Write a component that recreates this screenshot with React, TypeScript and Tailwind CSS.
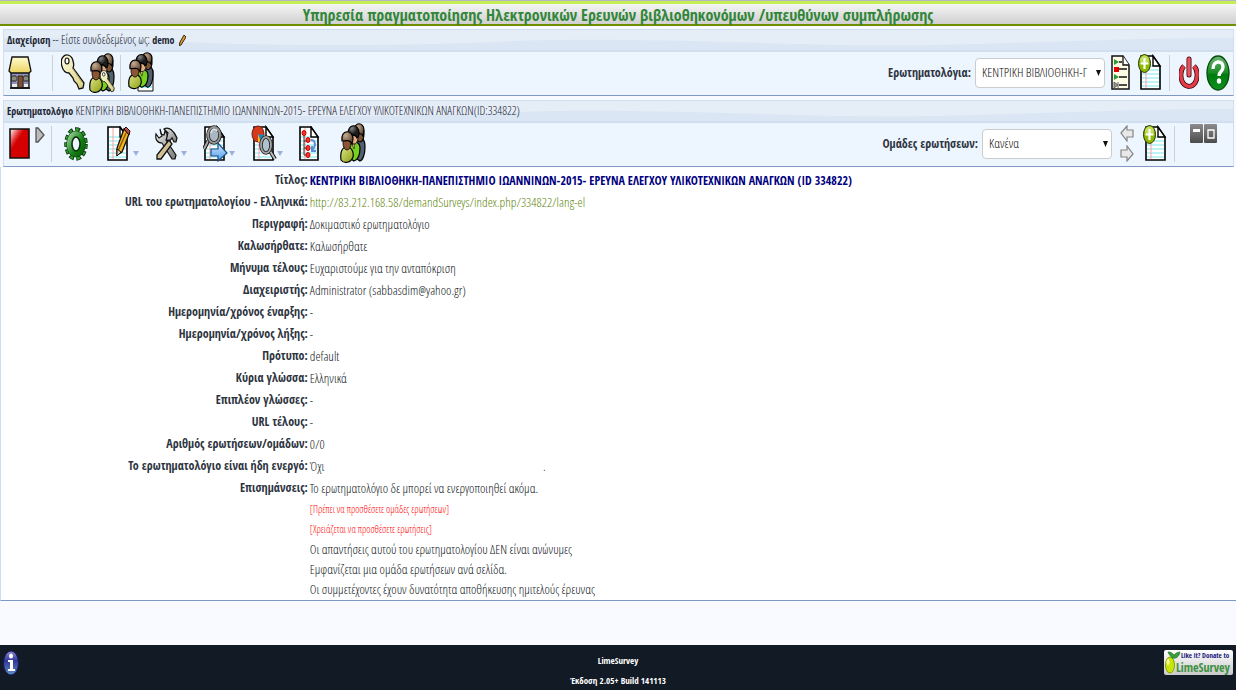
import type { ReactNode } from 'react';

type IconProps = { w: number; h: number; children: ReactNode; className?: string };

const Icon = ({ w, h, children, className = '' }: IconProps) => (
  <svg width={w} height={h} viewBox={`0 0 ${w} ${h}`} className={`block shrink-0 ${className}`} aria-hidden="true">
    {children}
  </svg>
);

const Defs = () => (
  <svg width="0" height="0" className="absolute" aria-hidden="true">
    <defs>
      <linearGradient id="roof" x1="0" y1="0" x2="0" y2="1">
        <stop offset="0" stopColor="#fffbd0" />
        <stop offset="1" stopColor="#ecd35e" />
      </linearGradient>
      <linearGradient id="brass" x1="0" y1="0" x2="1" y2="1">
        <stop offset="0" stopColor="#fffde0" />
        <stop offset="1" stopColor="#d9cf80" />
      </linearGradient>
      <linearGradient id="stop" x1="0" y1="0" x2="1" y2="1">
        <stop offset="0" stopColor="#fff" />
        <stop offset="0.3" stopColor="#e03030" />
        <stop offset="0.4" stopColor="#d40000" />
      </linearGradient>
      <linearGradient id="gearGreen" x1="0" y1="0" x2="1" y2="1">
        <stop offset="0" stopColor="#8fcc8f" />
        <stop offset="0.6" stopColor="#168016" />
        <stop offset="1" stopColor="#0a640a" />
      </linearGradient>
      <linearGradient id="helpGreen" x1="0" y1="0" x2="0" y2="1">
        <stop offset="0" stopColor="#6fb574" />
        <stop offset="0.5" stopColor="#178a22" />
        <stop offset="0.55" stopColor="#007a0c" />
        <stop offset="1" stopColor="#0c9320" />
      </linearGradient>
      <radialGradient id="skin" cx="0.35" cy="0.3" r="0.8">
        <stop offset="0" stopColor="#c9ad92" />
        <stop offset="1" stopColor="#4d3522" />
      </radialGradient>
      <radialGradient id="hair" cx="0.35" cy="0.2" r="0.8">
        <stop offset="0" stopColor="#888" />
        <stop offset="0.6" stopColor="#1d1d1d" />
      </radialGradient>
      <linearGradient id="shirt" x1="0" y1="0" x2="1" y2="1">
        <stop offset="0" stopColor="#dfe58a" />
        <stop offset="1" stopColor="#8ba010" />
      </linearGradient>
      <linearGradient id="steel" x1="0" y1="0" x2="1" y2="1">
        <stop offset="0" stopColor="#eee" />
        <stop offset="1" stopColor="#777" />
      </linearGradient>
      <linearGradient id="dark" x1="0" y1="0" x2="0" y2="1">
        <stop offset="0" stopColor="#8b8b8b" />
        <stop offset="1" stopColor="#4c4c4c" />
      </linearGradient>
      <linearGradient id="sky" x1="0" y1="0" x2="0" y2="1">
        <stop offset="0" stopColor="#d6ebff" />
        <stop offset="1" stopColor="#4d9bea" />
      </linearGradient>
      <linearGradient id="info" x1="0" y1="0" x2="0" y2="1">
        <stop offset="0" stopColor="#8c8fd0" />
        <stop offset="0.4" stopColor="#31379a" />
        <stop offset="1" stopColor="#5d8fc0" />
      </linearGradient>
      <linearGradient id="badge" x1="0" y1="0" x2="0" y2="1">
        <stop offset="0" stopColor="#fff" />
        <stop offset="1" stopColor="#c9c9c9" />
      </linearGradient>
    </defs>
  </svg>
);

const Paper = ({ x = 1, y = 1, w = 19, h = 33 }) => (
  <g>
    <path d={`M${x} ${y}h${w - 7}l7 10v${h - 10}h-${w}z`} fill="#fff" stroke="#000" strokeWidth="1.6" />
    <path
      d={`M${x + 1} ${y + 10}h${w - 2}M${x + 1} ${y + 14}h${w - 2}M${x + 1} ${y + 18}h${w - 2}M${x + 1} ${y + 22}h${w - 2}M${x + 1} ${y + 26}h${w - 2}M${x + 1} ${y + 30}h${w - 2}`}
      stroke="#a5f0f5"
      strokeWidth="1.5"
    />
    <path d={`M${x + 5} ${y + 1}v${h - 2}`} stroke="#f7a3a3" />
    <path d={`M${x + w - 7} ${y}v10h7z`} fill="#fff" stroke="#000" strokeWidth="1.4" />
  </g>
);

const People = () => (
  <g stroke="#000" strokeWidth="1.2">
    <path d="M16 16c5-4 9 0 9 8 0 7-2 13-5 14l-6-4z" fill="#52616f" />
    <ellipse cx="20" cy="11" rx="4" ry="8" fill="#7b5436" />
    <path d="M14 8c0-10 10-9 10-1l-1 6c-2-4-5-2-9-5z" fill="url(#skin)" />
    <path d="M9 23c2-6 11-5 11 2 0 8-3 12-6 13l-6-4z" fill="#76d21e" />
    <path d="M12 21h3l-1 5z" fill="#e2ad80" strokeWidth=".5" />
    <ellipse cx="14" cy="15" rx="4" ry="6" fill="#e2ad80" strokeWidth=".7" />
    <path d="M8 12c-1-12 11-12 11-2 0 4-2 5-2 5-1-4-5-3-9-3z" fill="url(#hair)" />
    <path d="M1 37c-1-8 1-13 6-13s7 6 6 10c-2 6-9 7-12 3z" fill="url(#shirt)" />
    <ellipse cx="7" cy="20" rx="4" ry="7" fill="#8d5534" strokeWidth=".8" />
    <path d="M2 18c-2-12 11-12 11-2l-1 5c-2-5-6-3-10-3z" fill="url(#skin)" />
  </g>
);

const KeyShape = () => (
  <g>
    <path
      d="M2 3c3-4 9-2 10 4 1 3 1 5 0 7l11 15-1 5-4 1-2-5-3-3-1-3-4-5c-8 0-9-13-6-16z"
      fill="url(#brass)"
      stroke="#111"
      strokeWidth="1.3"
    />
    <ellipse cx="6" cy="7" rx="2" ry="3" fill="#fff" stroke="#111" strokeWidth="1.2" />
    <path d="M12 15l9 13" stroke="#a59c55" />
  </g>
);

const HomeIcon = () => (
  <Icon w={24} h={34}>
    <path d="M3 14h18v18H3z" fill="#9193ba" stroke="#111" strokeWidth="1.3" />
    <path d="M4 1h16l3 14-2 2H3l-2-2z" fill="url(#roof)" stroke="#111" strokeWidth="1.3" />
    <path d="M4 20h4v5H4zM16 20h4v5h-4z" fill="#f3f4d8" stroke="#222" />
    <path d="M6 20v5M18 20v5" stroke="#222" />
    <path d="M4 28h5v3H4zM16 28h4v3h-4z" fill="#e8e8ee" />
    <path d="M10 20h5v12h-5z" fill="#795339" stroke="#3b2412" />
    <path d="M2 32h20" stroke="#111" strokeWidth="1.5" />
  </Icon>
);

const KeyIcon = () => (
  <Icon w={24} h={37}>
    <KeyShape />
  </Icon>
);

const UsersKeyIcon = () => (
  <Icon w={26} h={40}>
    <People />
    <g transform="translate(11 17) scale(.62)">
      <KeyShape />
    </g>
  </Icon>
);

const UsersPaperIcon = () => (
  <Icon w={27} h={41}>
    <path d="M10 18h15v21H10z" fill="#fff" stroke="#111" />
    <path d="M12 31h12M12 35h12" stroke="#8ff0f4" strokeWidth="1.5" />
    <g transform="scale(1 .93)">
      <People />
    </g>
  </Icon>
);

const UsersIcon = () => (
  <Icon w={26} h={41}>
    <People />
  </Icon>
);

const ListIcon = () => (
  <Icon w={19} h={35}>
    <path d="M1 1h11l6 9v24H1z" fill="#fdfbe4" stroke="#111" strokeWidth="1.5" />
    <path d="M12 1v9h6" fill="#fff" stroke="#111" strokeWidth="1.3" />
    <path d="M8 7h3M8 14h8M8 22h8M8 30h8" stroke="#111" strokeWidth="1.3" />
    <path d="M3 4l5 3-5 3zM3 19l5 3-5 3z" fill="#2a9a35" />
    <path d="M3 12h5v5H3z" fill="#e00000" />
    <path d="M3 27l4 3-4 3zM7 27v6" fill="#999" stroke="#666" />
  </Icon>
);

const AddPageIcon = () => (
  <Icon w={24} h={37}>
    <Paper x={3} y={2} w={19} h={33} />
    <ellipse cx="6.5" cy="9.5" rx="6" ry="9" fill="#8fb800" stroke="#263800" />
    <ellipse cx="6.5" cy="6" rx="4.5" ry="4.5" fill="#c0dc5b" />
    <path d="M6.5 4v11M2.5 9.5h8" stroke="#fff" strokeWidth="2.2" />
  </Icon>
);

const PowerIcon = () => (
  <Icon w={20} h={33}>
    <path d="M5 10C1 14 1 22 4 27c4 5 9 4 12 0 3-5 3-13-1-17" fill="none" stroke="#40070b" strokeWidth="5" />
    <path d="M5 10C1 14 1 22 4 27c4 5 9 4 12 0 3-5 3-13-1-17" fill="none" stroke="#e23e49" strokeWidth="3.4" />
    <path d="M10 3v16" stroke="#40070b" strokeWidth="5" strokeLinecap="round" />
    <path d="M10 3v16" stroke="#e8555e" strokeWidth="3.4" strokeLinecap="round" />
  </Icon>
);

const HelpIcon = () => (
  <Icon w={24} h={36}>
    <ellipse cx="12" cy="18" rx="11" ry="17" fill="url(#helpGreen)" stroke="#064a0a" strokeWidth="1.3" />
    <path d="M7 14c0-9 10-9 10-2 0 5-4 4-4 9" fill="none" stroke="#fff" strokeWidth="3.4" />
    <ellipse cx="13" cy="26" rx="2.2" ry="2.8" fill="#fff" />
  </Icon>
);

const StopIcon = () => (
  <Icon w={21} h={31}>
    <path d="M1 1h19v29H1z" fill="url(#stop)" stroke="#111" strokeWidth="1.6" />
  </Icon>
);

const PlayIcon = () => (
  <Icon w={10} h={16}>
    <path d="M1 1h2l6 7-6 7H1z" fill="#bbb" stroke="#555" strokeWidth="1.3" />
  </Icon>
);

const GearIcon = () => (
  <Icon w={24} h={36}>
    <ellipse cx="12" cy="18" rx="9.5" ry="14.5" fill="none" stroke="#052e05" strokeWidth="4.5" strokeDasharray="4.6 2.4" />
    <ellipse cx="12" cy="18" rx="9.5" ry="14.5" fill="none" stroke="#2f9a2f" strokeWidth="3" strokeDasharray="3 4" strokeDashoffset="-.8" />
    <ellipse cx="12" cy="18" rx="6.5" ry="10" fill="none" stroke="#052e05" strokeWidth="6.5" />
    <ellipse cx="12" cy="18" rx="6.5" ry="10" fill="none" stroke="url(#gearGreen)" strokeWidth="5.5" />
    <ellipse cx="12" cy="18" rx="4" ry="7" fill="#edf4fe" stroke="#052e05" strokeWidth="1.5" />
  </Icon>
);

const EditIcon = () => (
  <Icon w={24} h={36}>
    <Paper />
    <path d="M17 3l5 5-7 18-5 3v-7z" fill="#f2b41f" stroke="#111" strokeWidth="1.3" />
    <path d="M17 3l2-2 4 4-1 4z" fill="#c74545" stroke="#111" />
    <path d="M19 7l-8 18" stroke="#8b5707" strokeWidth="1.4" />
    <path d="M10 23l4 3-4 4z" fill="#e9d3a5" stroke="#111" />
  </Icon>
);

const ToolsIcon = () => (
  <Icon w={24} h={34}>
    <path d="M9 2c5-3 10 2 13 9l-1 4-2 0-2-4-3 4-3-3 2-6z" fill="url(#steel)" stroke="#111" strokeWidth="1.2" />
    <path d="M5 2l1 5 3 1 1-4c3 3 2 7 1 9l10 15-1 4-3 0L7 16C2 16 0 12 1 7l3 4 3-2z" fill="url(#steel)" stroke="#111" strokeWidth="1.2" />
    <path d="M14 13l3 4L6 32l-4 0 0-4z" fill="#cfc092" stroke="#111" strokeWidth="1.3" />
  </Icon>
);

const Lens = () => (
  <g>
    <path d="M5 16l-4 8" stroke="#111" strokeWidth="4" />
    <path d="M5 16l-4 8" stroke="#aaa" strokeWidth="2" />
    <ellipse cx="11" cy="10" rx="6" ry="8" fill="#a9b7c0" stroke="#222" strokeWidth="3.5" />
    <ellipse cx="11" cy="10" rx="6" ry="8" fill="none" stroke="#999" strokeWidth="1.8" />
    <path d="M8 8c1-5 5-5 6-2" stroke="#dde6eb" fill="none" strokeWidth="1.6" />
  </g>
);

const PreviewIcon = () => (
  <Icon w={25} h={37}>
    <Paper x={2} y={2} w={19} h={33} />
    <Lens />
    <path d="M8 24h7v-6l9 10-9 8v-5H8z" fill="url(#sky)" stroke="#174d87" strokeWidth="1.2" />
  </Icon>
);

const StatsIcon = () => (
  <Icon w={26} h={37}>
    <Paper x={3} y={2} w={19} h={33} />
    <ellipse cx="7" cy="9" rx="6" ry="8" fill="#d83b1b" stroke="#6b2010" />
    <path d="M7 9l6 1c0 4-2 6-3 7z" fill="#168ac0" />
    <path d="M7 9v8h3z" fill="#f0c11d" />
    <path d="M19 26l5 8" stroke="#111" strokeWidth="4" />
    <path d="M19 26l5 8" stroke="#bbb" strokeWidth="2" />
    <ellipse cx="15" cy="20" rx="5" ry="8" fill="#afc2cf" stroke="#222" strokeWidth="3.5" />
    <ellipse cx="15" cy="20" rx="5" ry="8" fill="none" stroke="#a5a5a5" strokeWidth="1.8" />
  </Icon>
);

const ReorderIcon = () => (
  <Icon w={21} h={36}>
    <Paper x={1} y={1} w={18} h={33} />
    <path d="M5 7v22M5 15h4M5 22h4M5 29h4" stroke="#333" fill="none" />
    <g fill="#ff3425" stroke="#b00">
      <ellipse cx="5" cy="7" rx="2" ry="2.5" />
      <ellipse cx="9" cy="14" rx="2" ry="2.5" />
      <ellipse cx="9" cy="22" rx="2" ry="2.5" />
      <ellipse cx="9" cy="29" rx="2" ry="2.5" />
    </g>
    <path d="M12 14c5 0 5 7 1 10m0-4v5h4" fill="none" stroke="#5a8fd8" strokeWidth="2" />
  </Icon>
);

const GreyArrow = ({ flip = false }) => (
  <Icon w={14} h={17} className={flip ? 'rotate-180' : ''}>
    <path d="M1 8l6-7v4h6v7H7v4z" fill="#e8e8e8" stroke="#858585" strokeWidth="1.2" />
  </Icon>
);

const Caret = () => (
  <Icon w={6} h={5}>
    <path d="M0 0h6L3 5z" fill="#9db0dc" />
  </Icon>
);

const Bold = ({ children, className = '' }: { children: ReactNode; className?: string }) => (
  <strong className={`font-['Open_Sans_Condensed','Noto_Sans',sans-serif] font-bold ${className}`}>{children}</strong>
);

const Separator = ({ className = '' }) => <span className={`h-9 w-px shrink-0 bg-[#cdd1d6] ${className}`} />;

const ToolButton = ({ label, children, className = '' }: { label: string; children: ReactNode; className?: string }) => (
  <button type="button" aria-label={label} className={`shrink-0 cursor-pointer ${className}`}>
    {children}
  </button>
);

const Bar = ({ title, children }: { title: ReactNode; children: ReactNode }) => (
  <section className="border border-[#cfdff0] border-b-[#7f99c5] bg-[#edf5ff]">
    <div className="relative h-[22px] border-b-2 border-[#d0dff0] bg-[#e5edf7]">
      <svg viewBox="0 0 1230 20" preserveAspectRatio="none" className="absolute inset-0 h-full w-full" aria-hidden="true">
        <path d="M0 8C150 8 200 16 350 15S500 9 620 10 820 17 930 15 1120 8 1230 8v12H0z" fill="#dae6f4" />
      </svg>
      <h2 className="relative truncate pl-[3px] text-[12px] leading-5 text-[#1c2330]">{title}</h2>
    </div>
    <div className="flex h-[43px] items-center pb-[2px]">{children}</div>
  </section>
);

type SelectProps = { id: string; label: string; option: string; className?: string };

const SelectField = ({ id, label, option, className = '' }: SelectProps) => (
  <div className={`flex items-center ${className}`}>
    <label htmlFor={id} className="mr-1 text-[12px] text-[#2d3440]">
      <Bold>{label}</Bold>
    </label>
    <div className="relative">
      <select
        id={id}
        className="block h-[30px] w-[130px] appearance-none rounded-sm border border-[#ccc] bg-white pl-1.5 pr-4 text-[13px] text-[#111]"
      >
        <option>{option}</option>
      </select>
      <svg width="5" height="6" viewBox="0 0 5 6" className="pointer-events-none absolute right-1 top-3" aria-hidden="true">
        <path d="M0 0h5L2.5 6z" fill="#111" />
      </svg>
    </div>
  </div>
);

const details: { label: string; value: ReactNode }[] = [
  {
    label: 'Τίτλος:',
    value: (
      <Bold className="text-[12px] text-[#000080]">
        ΚΕΝΤΡΙΚΗ ΒΙΒΛΙΟΘΗΚΗ-ΠΑΝΕΠΙΣΤΗΜΙΟ ΙΩΑΝΝΙΝΩΝ-2015- ΕΡΕΥΝΑ ΕΛΕΓΧΟΥ ΥΛΙΚΟΤΕΧΝΙΚΩΝ ΑΝΑΓΚΩΝ (ID 334822)
      </Bold>
    ),
  },
  {
    label: 'URL του ερωτηματολογίου - Ελληνικά:',
    value: (
      <a href="http://83.212.168.58/demandSurveys/index.php/334822/lang-el" className="text-[#5f8710]">
        http://83.212.168.58/demandSurveys/index.php/334822/lang-el
      </a>
    ),
  },
  { label: 'Περιγραφή:', value: 'Δοκιμαστικό ερωτηματολόγιο' },
  { label: 'Καλωσήρθατε:', value: 'Καλωσήρθατε' },
  { label: 'Μήνυμα τέλους:', value: 'Ευχαριστούμε για την ανταπόκριση' },
  { label: 'Διαχειριστής:', value: 'Administrator (sabbasdim@yahoo.gr)' },
  { label: 'Ημερομηνία/χρόνος έναρξης:', value: '-' },
  { label: 'Ημερομηνία/χρόνος λήξης:', value: '-' },
  { label: 'Πρότυπο:', value: 'default' },
  { label: 'Κύρια γλώσσα:', value: 'Ελληνικά' },
  { label: 'Επιπλέον γλώσσες:', value: '-' },
  { label: 'URL τέλους:', value: '-' },
  { label: 'Αριθμός ερωτήσεων/ομάδων:', value: '0/0' },
  {
    label: 'Το ερωτηματολόγιο είναι ήδη ενεργό:',
    value: (
      <span className="flex w-[236px] justify-between">
        <span>Όχι</span>
        <span>.</span>
      </span>
    ),
  },
  { label: 'Επισημάνσεις:', value: 'Το ερωτηματολόγιο δε μπορεί να ενεργοποιηθεί ακόμα.' },
];

const warnings = ['[Πρέπει να προσθέσετε ομάδες ερωτήσεων]', '[Χρειάζεται να προσθέσετε ερωτήσεις]'];

const notes = [
  'Οι απαντήσεις αυτού του ερωτηματολογίου ΔΕΝ είναι ανώνυμες',
  'Εμφανίζεται μια ομάδα ερωτήσεων ανά σελίδα.',
  'Οι συμμετέχοντες έχουν δυνατότητα αποθήκευσης ημιτελούς έρευνας',
];

const Header = () => (
  <header className="border-t border-[#b5b5c5]">
    <div className="border-b-2 border-t-[3px] border-b-[#6f8f00] border-t-[#c5ee55] bg-linear-to-b from-[#f5f5f5] to-[#d0d0d0]">
      <h1 className="h-5 text-center text-[16px] leading-[22px] text-[#328639]">
        <Bold>Υπηρεσία πραγματοποίησης Ηλεκτρονικών Ερευνών βιβλιοθηκονόμων /υπευθύνων συμπλήρωσης</Bold>
      </h1>
    </div>
  </header>
);

const AdminBar = () => (
  <Bar
    title={(
      <span className="flex items-center gap-1">
        <span>
          <Bold className="text-[10px]">Διαχείριση</Bold> -- Είστε συνδεδεμένος ως: <Bold className="text-[10px]">demo</Bold>
        </span>
        <Icon w={7} h={11}>
          <path d="M5 0l2 2-5 8-2 1 1-4z" fill="#e29525" stroke="#3c2b17" />
        </Icon>
      </span>
    )}
  >
    <ToolButton label="Αρχική" className="ml-1"><HomeIcon /></ToolButton>
    <Separator className="ml-5" />
    <ToolButton label="Κωδικός" className="ml-2"><KeyIcon /></ToolButton>
    <ToolButton label="Διαχειριστές" className="ml-1"><UsersKeyIcon /></ToolButton>
    <Separator className="ml-[5px]" />
    <ToolButton label="Συμμετέχοντες" className="ml-[7px]"><UsersPaperIcon /></ToolButton>
    <SelectField id="survey" label="Ερωτηματολόγια:" option="ΚΕΝΤΡΙΚΗ ΒΙΒΛΙΟΘΗΚΗ-Γ" className="ml-auto" />
    <ToolButton label="Λίστα ερευνών" className="ml-[6px]"><ListIcon /></ToolButton>
    <ToolButton label="Νέα έρευνα" className="ml-2"><AddPageIcon /></ToolButton>
    <Separator className="ml-[7px]" />
    <ToolButton label="Έξοδος" className="ml-[9px]"><PowerIcon /></ToolButton>
    <ToolButton label="Βοήθεια" className="ml-[7px] mr-[3px]"><HelpIcon /></ToolButton>
  </Bar>
);

const MenuTool = ({ label, children }: { label: string; children: ReactNode }) => (
  <ToolButton label={label} className="flex w-12 items-center justify-between pr-4">
    {children}
    <span className="pt-5"><Caret /></span>
  </ToolButton>
);

const SurveyBar = () => (
  <Bar
    title={(
      <>
        <Bold className="text-[10px]">Ερωτηματολόγιο</Bold> ΚΕΝΤΡΙΚΗ ΒΙΒΛΙΟΘΗΚΗ-ΠΑΝΕΠΙΣΤΗΜΙΟ ΙΩΑΝΝΙΝΩΝ-2015- ΕΡΕΥΝΑ ΕΛΕΓΧΟΥ ΥΛΙΚΟΤΕΧΝΙΚΩΝ ΑΝΑΓΚΩΝ(ID:334822)
      </>
    )}
  >
    <ToolButton label="Ανενεργό" className="ml-[5px]"><StopIcon /></ToolButton>
    <ToolButton label="Ενεργοποίηση" className="ml-[5px] self-start pt-1"><PlayIcon /></ToolButton>
    <Separator className="ml-[6px]" />
    <ToolButton label="Ρυθμίσεις" className="ml-3"><GearIcon /></ToolButton>
    <div className="ml-[19px] flex items-center">
      <MenuTool label="Ιδιότητες"><EditIcon /></MenuTool>
      <MenuTool label="Εργαλεία"><ToolsIcon /></MenuTool>
      <MenuTool label="Προβολή"><PreviewIcon /></MenuTool>
      <MenuTool label="Απαντήσεις"><StatsIcon /></MenuTool>
    </div>
    <ToolButton label="Αναδιάταξη"><ReorderIcon /></ToolButton>
    <ToolButton label="Συμμετέχοντες" className="ml-5"><UsersIcon /></ToolButton>
    <SelectField id="group" label="Ομάδες ερωτήσεων:" option="Κανένα" className="ml-auto" />
    <div className="ml-2 flex flex-col gap-[3px]">
      <ToolButton label="Προηγούμενη"><GreyArrow /></ToolButton>
      <ToolButton label="Επόμενη"><GreyArrow flip /></ToolButton>
    </div>
    <ToolButton label="Νέα ομάδα" className="ml-[9px]"><AddPageIcon /></ToolButton>
    <Separator className="ml-[7px]" />
    <div className="ml-[15px] mr-4 flex gap-px self-start pt-px">
      <ToolButton label="Ελαχιστοποίηση">
        <Icon w={13} h={19}>
          <rect width="13" height="19" rx="1" fill="url(#dark)" />
          <path d="M3 5h7v3H3z" fill="#fff" />
        </Icon>
      </ToolButton>
      <ToolButton label="Μεγιστοποίηση">
        <Icon w={13} h={19}>
          <rect width="13" height="19" rx="1" fill="url(#dark)" />
          <path d="M4 6h6v8H4z" fill="none" stroke="#fff" strokeWidth="1.3" />
        </Icon>
      </ToolButton>
    </div>
  </Bar>
);

const Details = () => (
  <main className="border-b border-l border-b-[#7f99c5] border-l-[#cfdff0] bg-white pb-px pt-0.5">
    <table className="w-full table-fixed text-[13px] leading-5 text-[#111722]">
      <tbody>
        {details.map(({ label, value }) => (
          <tr key={label} className="h-[22px]">
            <th scope="row" className="w-1/4 whitespace-nowrap pr-0.5 text-right text-[12px] text-[#2d3440]">
              <Bold>{label}</Bold>
            </th>
            <td className="whitespace-nowrap">{value}</td>
          </tr>
        ))}
        {warnings.map((text) => (
          <tr key={text} className="h-5 text-[10px] text-[#f00]">
            <td />
            <td>{text}</td>
          </tr>
        ))}
        {notes.map((text) => (
          <tr key={text} className="h-5">
            <td />
            <td>{text}</td>
          </tr>
        ))}
      </tbody>
    </table>
  </main>
);

const Footer = () => (
  <footer className="mt-11 grid h-[45px] grid-cols-3 items-start bg-[#121a26] text-white">
    <a href="#help" aria-label="Πληροφορίες" className="ml-[3px] mt-[5px] justify-self-start">
      <Icon w={17} h={26}>
        <ellipse cx="8" cy="13" rx="7.5" ry="12" fill="url(#info)" stroke="#17195c" />
        <ellipse cx="8" cy="6" rx="2" ry="2.5" fill="#fff" />
        <path d="M5 10h5v9h2v2H5v-2h2v-7H5z" fill="#fff" />
      </Icon>
    </a>
    <div className="pt-1.5 text-center text-[9px] leading-5">
      <a href="#limesurvey" className="block"><Bold>LimeSurvey</Bold></a>
      <p><Bold>Έκδοση 2.05+ Build 141113</Bold></p>
    </div>
    <a href="#donate" className="mr-[3px] mt-[5px] justify-self-end">
      <svg
        width="69"
        height="25"
        viewBox="0 0 69 25"
        className="block font-['Open_Sans_Condensed','Noto_Sans',sans-serif] font-bold"
        role="img"
        aria-label="LimeSurvey"
      >
        <rect width="69" height="25" rx="2" fill="url(#badge)" />
        <ellipse cx="6" cy="15" rx="4.5" ry="8" fill="#c9e60c" stroke="#85a800" />
        <ellipse cx="4" cy="12" rx="1.5" ry="3" fill="#f4ff9c" />
        <path d="M4 2c4 0 5 2 6 3 2-2 4-3 6-3-1 5-4 7-8 6C7 6 5 5 4 2z" fill="#3a9e3a" stroke="#1e7123" strokeWidth=".7" />
        <text x="17" y="8" fontSize="7" fill="#15157a">Like it? Donate to</text>
        <text x="12" y="22" fontSize="12" fill="#3d9142">LimeSurvey</text>
      </svg>
    </a>
  </footer>
);

const App = () => (
  <div className="bg-[#f8faff] font-['Open_Sans_Condensed_Light','Open_Sans_Condensed','Noto_Sans',sans-serif]">
    <Defs />
    <Header />
    <div className="flex flex-col gap-1 pl-[3px] pr-0.5 pt-[3px]">
      <AdminBar />
      <SurveyBar />
    </div>
    <Details />
    <Footer />
  </div>
);

export default App;
